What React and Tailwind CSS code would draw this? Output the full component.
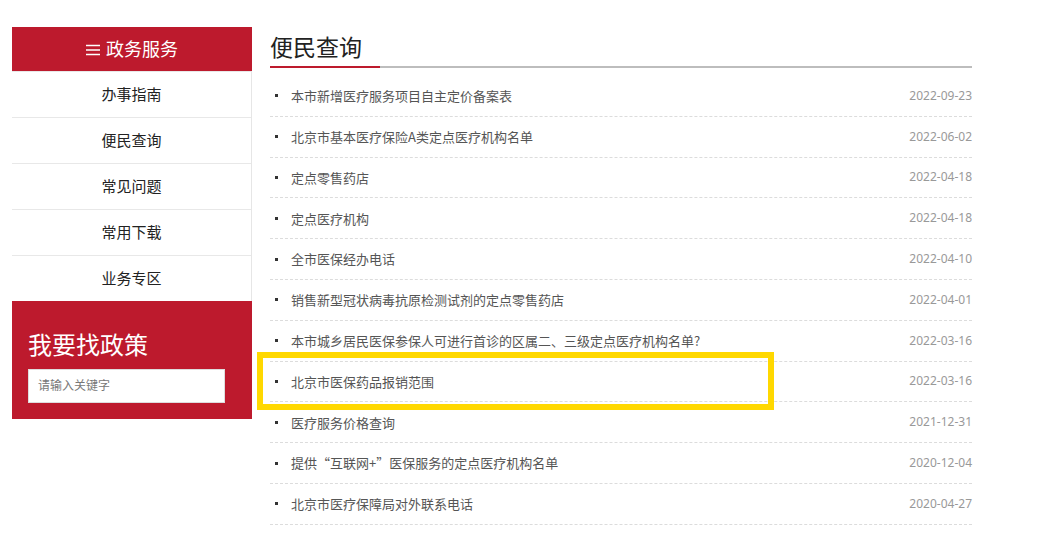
import React from 'react';

const menu = ['办事指南', '便民查询', '常见问题', '常用下载', '业务专区'];

const items = [
  ['本市新增医疗服务项目自主定价备案表', '2022-09-23'],
  ['北京市基本医疗保险A类定点医疗机构名单', '2022-06-02'],
  ['定点零售药店', '2022-04-18'],
  ['定点医疗机构', '2022-04-18'],
  ['全市医保经办电话', '2022-04-10'],
  ['销售新型冠状病毒抗原检测试剂的定点零售药店', '2022-04-01'],
  ['本市城乡居民医保参保人可进行首诊的区属二、三级定点医疗机构名单?', '2022-03-16'],
  ['北京市医保药品报销范围', '2022-03-16'],
  ['医疗服务价格查询', '2021-12-31'],
  ['提供“互联网+”医保服务的定点医疗机构名单', '2020-12-04'],
  ['北京市医疗保障局对外联系电话', '2020-04-27'],
];

export default function App() {
  return (
    <div
      className="relative min-h-[534px] w-[1046px] bg-white"
      style={{ fontFamily: '"Noto Sans", "Noto Sans CJK SC", sans-serif' }}
    >
      <div className="flex items-start pl-[12px] pt-[27px]">
        {/* sidebar */}
        <aside className="w-[240px] shrink-0">
          <div className="flex h-[44px] items-center justify-center gap-[6px] bg-[#bd1a2d] text-[18px] text-white">
            <svg width="14" height="12" viewBox="0 0 14 12" className="mt-[1px]">
              <path d="M0 1.5h14M0 6h14M0 10.5h14" stroke="#fff" strokeWidth="1.3" />
            </svg>
            政务服务
          </div>
          <ul className="border-r border-[#e6e6e6]">
            {menu.map((m) => (
              <li
                key={m}
                className="flex h-[46px] items-center justify-center border-t border-[#e8e8e8] text-[15px] text-[#222]"
              >
                {m}
              </li>
            ))}
          </ul>
          <div className="h-[118px] bg-[#bd1a2d] px-[16px] pt-[27px]">
            <h3 className="text-[24px] leading-[34px] text-white">我要找政策</h3>
            <div className="mt-[7px] flex h-[34px] w-[197px] items-center border border-[#ddd] bg-white pl-[9px] text-[12px] text-[#777]">
              请输入关键字
            </div>
          </div>
        </aside>

        {/* main */}
        <main className="ml-[18px] w-[702px]">
          <h2 className="pt-[4px] text-[23px] leading-[32px] text-[#222]">便民查询</h2>
          <div className="mt-[3px] h-[2px] bg-[#bdbdbd]">
            <div className="h-full w-[110px] bg-[#bd1a2d]" />
          </div>
          <ul className="mt-[8px]">
            {items.map(([t, d], i) => (
              <li
                key={i}
                className="flex h-[40.8px] items-center border-b border-dashed border-[#dcdcdc] pl-[5px] text-[13px]"
              >
                <span className="h-[3px] w-[3px] bg-[#333]" />
                <span
                  className="ml-[13px] flex-1 text-[#555]"
                  style={{ fontFamily: '"Noto Sans CJK SC", sans-serif' }}
                >
                  {t}
                </span>
                <span className="text-[12px] text-[#999]">{d}</span>
              </li>
            ))}
          </ul>
        </main>
      </div>

      {/* highlight annotation */}
      <div className="pointer-events-none absolute left-[257px] top-[352px] h-[58px] w-[517px] border-[6px] border-[#ffd800]" />
    </div>
  );
}
